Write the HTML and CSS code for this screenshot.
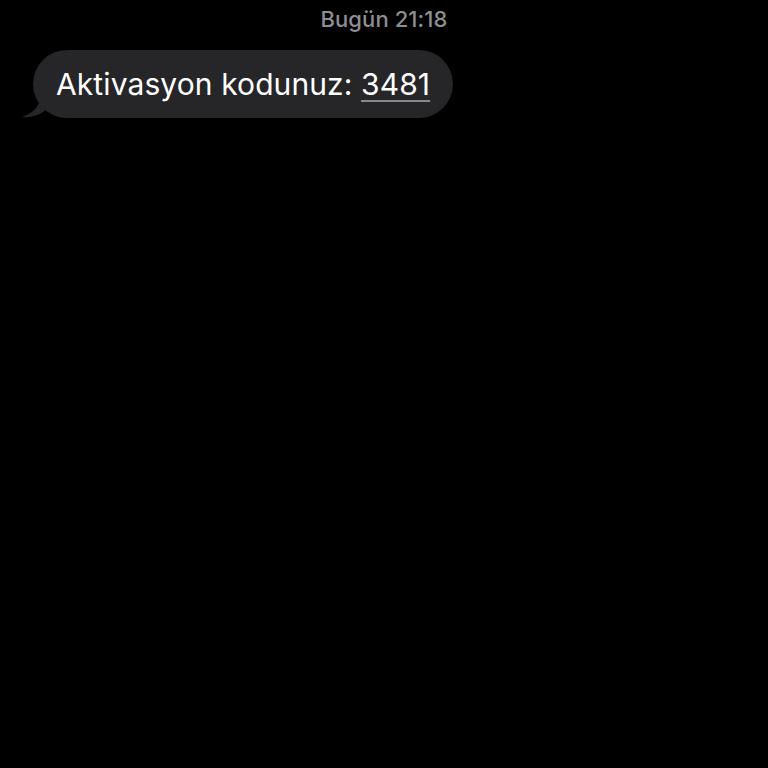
FILE: index.html
```html
<!DOCTYPE html>
<html lang="tr">
<head>
    <meta charset="UTF-8">
    <meta name="viewport" content="width=device-width, initial-scale=1.0">
    <title>Mesajlar</title>
    <link rel="stylesheet" href="styles.css">
</head>
<body>
    <div class="thread">
        <div class="timestamp">Bugün 21:18</div>
        <div class="message-row">
            <div class="bubble">
                <svg class="tail" width="24" height="22" viewBox="0 0 24 22">
                    <path d="M18 0 C18 8 14 16 0 21 C8 22 16 20 24 14 L24 0 Z" fill="#262628"/>
                </svg>
                <span class="text">Aktivasyon kodunuz: <span class="code">3481</span></span>
            </div>
        </div>
    </div>
</body>
</html>
```

FILE: styles.css
```css
html, body {
    margin: 0;
    padding: 0;
    background-color: #000;
    height: 100%;
}

body {
    font-family: 'Inter', 'Roboto', sans-serif;
    color: #fff;
}

.thread {
    padding-top: 5px;
}

.timestamp {
    text-align: center;
    color: #8e8e93;
    font-size: 22px;
    font-weight: 500;
    letter-spacing: 0.1px;
    line-height: 28px;
}

.message-row {
    display: flex;
    padding-top: 17px;
    padding-left: 33px;
}

.bubble {
    position: relative;
    background-color: #262628;
    border-radius: 34px;
    padding: 0 23px;
    height: 68px;
    display: flex;
    align-items: center;
}

.tail {
    position: absolute;
    left: -11px;
    bottom: 0;
}

.text {
    font-size: 30px;
    letter-spacing: 0.1px;
    position: relative;
}

.code {
    text-decoration: underline;
    text-decoration-color: #8a8a8e;
    text-decoration-thickness: 2px;
    text-underline-offset: 5px;
}
```
